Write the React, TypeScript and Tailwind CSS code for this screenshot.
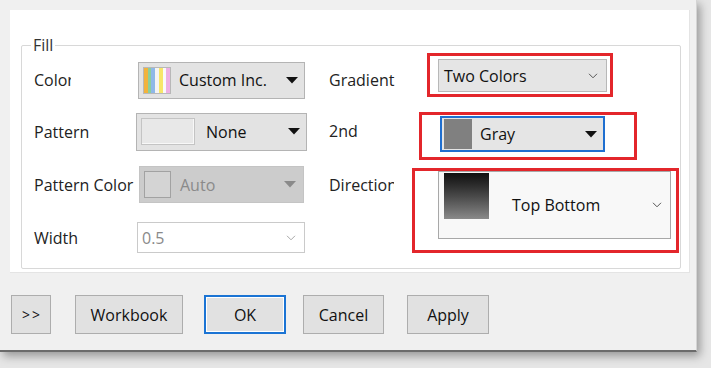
import React from "react";

const font = { fontFamily: '"Open Sans", "Noto Sans", sans-serif' };

const Triangle = ({ color = "#111" }: { color?: string }) => (
    <svg width="12" height="7" viewBox="0 0 12 7">
        <polygon points="0,0 12,0 6,6.5" fill={color} />
    </svg>
);

const Chevron = ({ color = "#555" }: { color?: string }) => (
    <svg width="10" height="6" viewBox="0 0 10 6" fill="none">
        <polyline points="1,0.8 5,4.8 9,0.8" stroke={color} strokeWidth="1" />
    </svg>
);

const Stripes = () => {
    const colors = ["#f2b33d", "#8ccf9a", "#8fb8e8", "#f4f4f4", "#f7e66a", "#fafafa", "#eeb0e4"];
    return (
        <div className="flex w-[28px] h-[27px] border border-[#b8b8b8]">
            {colors.map((c, i) => (
                <div key={i} className="flex-1 h-full" style={{ backgroundColor: c }} />
            ))}
        </div>
    );
};

const App = () => {
    return (
        <div className="w-[711px] h-[368px] bg-[#e6e6e6] overflow-hidden text-[16px] text-[#222]" style={font}>
            {/* dialog */}
            <div className="w-[697px] h-[352px] bg-[#f0f0f0] border-b-[2px] border-r border-b-[#6b6b6b] border-r-[#d4d4d4] shadow-[3px_4px_9px_rgba(0,0,0,0.35)] pt-[10px] pl-[10px] flex flex-col">

                {/* white panel */}
                <div className="w-[680px] h-[263px] bg-white border-r border-b border-[#e4e4e4] pt-[35px] pl-[11px]">
                    <div className="relative w-[660px] h-[224px] border border-[#d8d8d8] rounded-[2px] flex">
                        <span className="absolute -top-[12px] left-[9px] bg-white px-[2px] leading-[22px] text-[#333]">Fill</span>

                        {/* left column */}
                        <div className="w-[307px] pl-[12px] pt-[8px] flex flex-col">
                            <div className="h-[52px] flex items-center">
                                <div className="w-[102px]"><div className="w-[37px] overflow-hidden whitespace-nowrap">Color</div></div>
                                <div className="ml-[2px] w-[167px] h-[37px] bg-[#e3e3e3] border border-[#b4b4b4] flex items-center pl-[4px] pr-[6px]">
                                    <Stripes />
                                    <span className="ml-[8px] flex-1 text-[#111]">Custom Inc.</span>
                                    <Triangle />
                                </div>
                            </div>
                            <div className="h-[51px] flex items-center">
                                <div className="w-[102px]">Pattern</div>
                                <div className="w-[171px] h-[38px] bg-[#e3e3e3] border border-[#b4b4b4] flex items-center pl-[4px] pr-[6px]">
                                    <div className="w-[54px] h-[27px] bg-[#e8e8e8] border border-[#c4c4c4] shadow-[inset_-1px_-1px_0_#f8f8f8]" />
                                    <span className="ml-[11px] flex-1 text-[#111]">None</span>
                                    <Triangle />
                                </div>
                            </div>
                            <div className="h-[55px] flex items-center">
                                <div className="w-[102px] whitespace-nowrap">Pattern Color</div>
                                <div className="ml-[3px] w-[165px] h-[37px] bg-[#cccccc] border border-[#c4c4c4] flex items-center pl-[4px] pr-[7px]">
                                    <div className="w-[27px] h-[27px] bg-[#d4d4d4] border border-[#a2a2a2]" />
                                    <span className="ml-[9px] flex-1 text-[#8a8a8a]">Auto</span>
                                    <Triangle color="#8a8a8a" />
                                </div>
                            </div>
                            <div className="h-[51px] flex items-center">
                                <div className="w-[102px]">Width</div>
                                <div className="ml-[1px] w-[168px] h-[31px] bg-white border border-[#cacaca] flex items-center pl-[4px] pr-[8px]">
                                    <span className="flex-1 text-[#8a8a8a]">0.5</span>
                                    <Chevron color="#a8a8a8" />
                                </div>
                            </div>
                        </div>

                        {/* right column */}
                        <div className="flex-1 pt-[7px] flex flex-col">
                            <div className="flex items-start">
                                <div className="w-[98px] pt-[17px] leading-[20px]">Gradient</div>
                                <div className="border-[3px] border-[#e3262b] pl-[8px] pr-[3px] pt-[3px] pb-[2px]">
                                    <div className="w-[169px] h-[33px] bg-[#e5e5e5] border border-[#b8b8b8] flex items-center pl-[5px] pr-[8px]">
                                        <span className="flex-1 text-[#111]">Two Colors</span>
                                        <Chevron />
                                    </div>
                                </div>
                            </div>
                            <div className="mt-[15px] flex items-start">
                                <div className="w-[90px] pt-[9px] leading-[20px]">2nd</div>
                                <div className="border-[3px] border-[#e3262b] pl-[18px] pr-[29px] pt-[1px] pb-[5px]">
                                    <div className="w-[165px] h-[36px] bg-[#e5e5e5] border-2 border-[#1f6fd0] flex items-center pl-[2px] pr-[6px]">
                                        <div className="w-[28px] h-[30px] bg-[#808080]" />
                                        <span className="ml-[8px] flex-1 text-[#111]">Gray</span>
                                        <Triangle />
                                    </div>
                                </div>
                            </div>
                            <div className="mt-[8px] flex items-start">
                                <div className="w-[83px] pt-[7px] leading-[20px]">
                                    <div className="w-[65px] overflow-hidden whitespace-nowrap">Direction</div>
                                </div>
                                <div className="border-[3px] border-[#e3262b] pl-[23px] pr-[5px] pb-[11px]">
                                    <div className="w-[233px] h-[68px] bg-[#f8f8f8] border border-[#a8a8a8] flex items-center pl-[5px] pr-[8px]">
                                        <div className="self-start mt-[1px] w-[45px] h-[46px] bg-gradient-to-b from-[#101010] to-[#8a8a8a]" />
                                        <span className="ml-[23px] flex-1 text-[#111]">Top Bottom</span>
                                        <Chevron />
                                    </div>
                                </div>
                            </div>
                        </div>
                    </div>
                </div>

                {/* buttons */}
                <div className="mt-[22px] flex items-center text-[#111]">
                    <button className="ml-[1px] w-[40px] h-[39px] bg-[#e1e1e1] border border-[#adadad] text-[14px] tracking-[2px] pl-[2px]">&gt;&gt;</button>
                    <button className="ml-[24px] w-[108px] h-[39px] bg-[#e1e1e1] border border-[#adadad]">Workbook</button>
                    <button className="ml-[21px] w-[82px] h-[39px] bg-[#e1e1e1] border-2 border-[#1b74d4] shadow-[inset_0_0_0_1px_#ffffff]">OK</button>
                    <button className="ml-[17px] w-[81px] h-[39px] bg-[#e1e1e1] border border-[#adadad]">Cancel</button>
                    <button className="ml-[23px] w-[82px] h-[39px] bg-[#e1e1e1] border border-[#adadad]">Apply</button>
                </div>
            </div>
        </div>
    );
};

export default App;
